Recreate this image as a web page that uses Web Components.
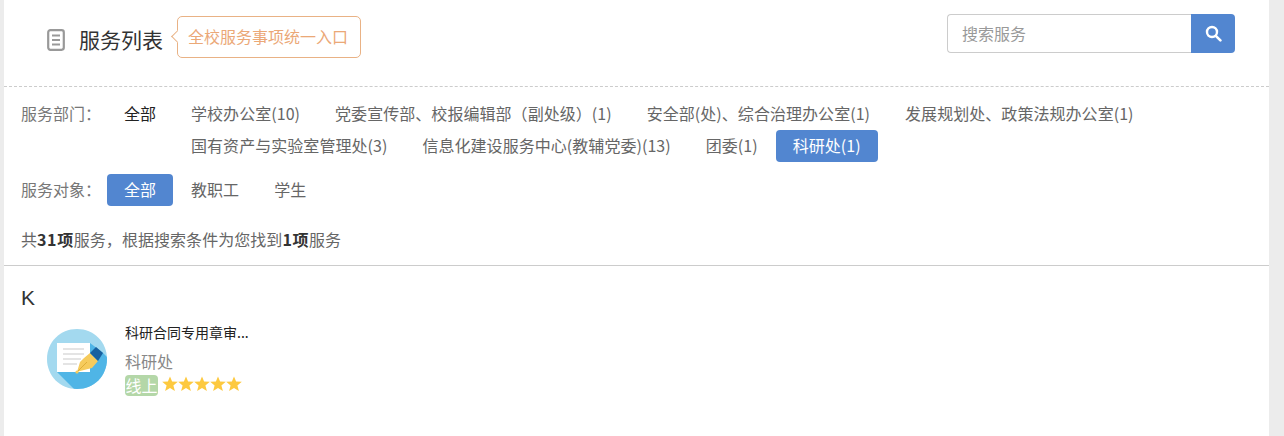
<!DOCTYPE html>
<html lang="zh">
<head>
<meta charset="utf-8">
<title>服务列表</title>
<style>
    html, body { margin: 0; height: 100%; }
    body {
        background: #ececec;
        font-family: "Noto Sans CJK SC", "Liberation Sans", sans-serif;
        overflow: hidden;
    }
</style>
</head>
<body>
<service-page>
    <service-header slot="header" title-text="服务列表" tip="全校服务事项统一入口" placeholder="搜索服务"></service-header>
    <filter-row label="服务部门：">
        <filter-chip slot="all" plain>全部</filter-chip>
        <filter-chip>学校办公室(10)</filter-chip>
        <filter-chip>党委宣传部、校报编辑部（副处级）(1)</filter-chip>
        <filter-chip>安全部(处)、综合治理办公室(1)</filter-chip>
        <filter-chip>发展规划处、政策法规办公室(1)</filter-chip>
        <filter-chip>国有资产与实验室管理处(3)</filter-chip>
        <filter-chip>信息化建设服务中心(教辅党委)(13)</filter-chip>
        <filter-chip>团委(1)</filter-chip>
        <filter-chip active>科研处(1)</filter-chip>
    </filter-row>
    <filter-row label="服务对象：">
        <filter-chip slot="all" active>全部</filter-chip>
        <filter-chip>教职工</filter-chip>
        <filter-chip>学生</filter-chip>
    </filter-row>
    <result-count total="31" found="1"></result-count>
    <service-group letter="K">
        <service-card name="科研合同专用章审..." dept="科研处" mode="线上"></service-card>
    </service-group>
</service-page>

<script>
class ServicePage extends HTMLElement {
    constructor() {
        super();
        this.attachShadow({ mode: 'open' });
        this.shadowRoot.innerHTML = `
        <style>
            :host {
                display: block;
                box-sizing: border-box;
                width: 1265px;
                height: 436px;
                margin-left: 4px;
                background: #fff;
            }
            .filters {
                padding: 11px 0 0 0;
            }
        </style>
        <slot name="header"></slot>
        <div class="filters"><slot></slot></div>
        `;
    }
}

class ServiceHeader extends HTMLElement {
    constructor() {
        super();
        this.attachShadow({ mode: 'open' });
        this.shadowRoot.innerHTML = `
        <style>
            :host {
                display: flex;
                justify-content: space-between;
                box-sizing: border-box;
                height: 87px;
                padding: 14px 34px 0 42px;
                border-bottom: 1px dashed #ccc;
            }
            .left {
                display: flex;
                align-items: center;
                height: 44px;
            }
            svg.doc { width: 20px; height: 24px; flex: none; margin-top: 8px; }
            h1 {
                margin: 6px 0 0 13px;
                font-size: 21px;
                font-weight: 400;
                color: #333;
                line-height: 28px;
                white-space: nowrap;
            }
            .tip {
                position: relative;
                box-sizing: border-box;
                height: 42px;
                margin: 1px 0 0 14px;
                padding: 0 11px 0 10px;
                width: 184px;
                border: 1px solid #e9b285;
                border-radius: 5px;
                color: #eba877;
                font-size: 16px;
                line-height: 38px;
                white-space: nowrap;
                background: #fff;
            }
            .tip::before {
                content: "";
                position: absolute;
                left: -5px;
                top: 15px;
                width: 8px;
                height: 8px;
                background: #fff;
                border-left: 1px solid #e9b285;
                border-bottom: 1px solid #e9b285;
                transform: rotate(45deg);
            }
            .search {
                display: flex;
                height: 39px;
                width: 288px;
            }
            .search input {
                flex: 1;
                min-width: 0;
                box-sizing: border-box;
                padding: 0 14px 2px;
                border: 1px solid #ccc;
                border-right: 0;
                border-radius: 4px 0 0 4px;
                font: 16px "Noto Sans CJK SC", "Liberation Sans", sans-serif;
                color: #555;
                outline: none;
            }
            .search input::placeholder { color: #999; opacity: 1; }
            .search button {
                display: flex;
                align-items: center;
                justify-content: center;
                width: 44px;
                padding: 0;
                border: 0;
                border-radius: 0 4px 4px 0;
                background: #5286d0;
            }
            .search svg { width: 17px; height: 17px; }
        </style>
        <div class="left">
            <svg class="doc" viewBox="0 0 20 24" fill="none" stroke="#999">
                <rect x="2.2" y="2.2" width="15.6" height="19.6" rx="2.2" stroke-width="2.2"/>
                <path d="M6 7.5h8M6 12h8M6 16.5h8" stroke-width="1.8"/>
            </svg>
            <h1></h1>
            <div class="tip"></div>
        </div>
        <div class="search">
            <input type="text">
            <button type="button" aria-label="搜索">
                <svg viewBox="0 0 17 17" fill="none" stroke="#fff">
                    <circle cx="7" cy="7" r="5" stroke-width="2.4"/>
                    <path d="M10.8 10.8l4.6 4.6" stroke-width="2.6" stroke-linecap="round"/>
                </svg>
            </button>
        </div>
        `;
    }

    connectedCallback() {
        this.shadowRoot.querySelector('h1').textContent = this.getAttribute('title-text');
        this.shadowRoot.querySelector('.tip').textContent = this.getAttribute('tip');
        this.shadowRoot.querySelector('input').placeholder = this.getAttribute('placeholder');
    }
}

class FilterRow extends HTMLElement {
    constructor() {
        super();
        this.attachShadow({ mode: 'open' });
        this.shadowRoot.innerHTML = `
        <style>
            :host {
                display: flex;
                align-items: flex-start;
                box-sizing: border-box;
                padding: 0 100px 0 17px;
                margin-bottom: 12px;
            }
            .label {
                flex: none;
                width: 86px;
                font-size: 16px;
                line-height: 30px;
                color: #777;
                white-space: nowrap;
            }
            .all { flex: none; box-sizing: border-box; width: 67px; padding-right: 1px; }
            .items {
                display: flex;
                flex-wrap: wrap;
                gap: 0 1px;
            }
        </style>
        <div class="label"></div>
        <div class="all"><slot name="all"></slot></div>
        <div class="items"><slot></slot></div>
        `;
    }

    connectedCallback() {
        this.shadowRoot.querySelector('.label').textContent = this.getAttribute('label');
    }
}

class FilterChip extends HTMLElement {
    constructor() {
        super();
        this.attachShadow({ mode: 'open' });
        this.shadowRoot.innerHTML = `
        <style>
            :host {
                display: block;
                height: 32px;
                padding: 0 17px;
                border-radius: 4px;
                font-size: 16px;
                line-height: 30px;
                letter-spacing: .05px;
                color: #666;
                white-space: nowrap;
            }
            :host([plain]) { color: #222; }
            :host([active]) { background: #5286d0; color: #fff; }
            :host([slot="all"]) { letter-spacing: 0; }
        </style>
        <slot></slot>
        `;
    }
}

class ResultCount extends HTMLElement {
    constructor() {
        super();
        this.attachShadow({ mode: 'open' });
        this.shadowRoot.innerHTML = `
        <style>
            :host {
                display: block;
                box-sizing: border-box;
                height: 48px;
                padding: 5px 0 0 17px;
                border-bottom: 1px solid #ccc;
                font-size: 16px;
                line-height: 32px;
                letter-spacing: .05px;
                color: #666;
            }
            b { color: #333; letter-spacing: .6px; }
        </style>
        共<b class="total"></b>服务，根据搜索条件为您找到<b class="found"></b>服务
        `;
    }

    connectedCallback() {
        this.shadowRoot.querySelector('.total').textContent = this.getAttribute('total') + '项';
        this.shadowRoot.querySelector('.found').textContent = this.getAttribute('found') + '项';
    }
}

class ServiceGroup extends HTMLElement {
    constructor() {
        super();
        this.attachShadow({ mode: 'open' });
        this.shadowRoot.innerHTML = `
        <style>
            :host { display: block; padding: 19px 0 0 17px; }
            h2 {
                margin: 0;
                font-size: 21px;
                font-weight: 400;
                line-height: 26px;
                color: #333;
                font-family: "Liberation Sans", sans-serif;
            }
            .list { display: flex; padding: 18px 0 0 26px; }
        </style>
        <h2></h2>
        <div class="list"><slot></slot></div>
        `;
    }

    connectedCallback() {
        this.shadowRoot.querySelector('h2').textContent = this.getAttribute('letter');
    }
}

class ServiceCard extends HTMLElement {
    constructor() {
        super();
        this.attachShadow({ mode: 'open' });
        this.shadowRoot.innerHTML = `
        <style>
            :host { display: flex; width: 205px; }
            svg.icon { flex: none; width: 60px; height: 60px; margin: 0 18px 0 0; }
            .body { width: 124px; margin-top: -7px; }
            .name {
                font-size: 14px;
                line-height: 20px;
                color: #222;
                white-space: nowrap;
                overflow: hidden;
                text-overflow: ellipsis;
            }
            .dept {
                margin-top: 8px;
                font-size: 16px;
                line-height: 22px;
                color: #888;
            }
            .meta { display: flex; align-items: center; margin: 2px 0 0 0; height: 22px; }
            .tag {
                width: 33px;
                height: 21px;
                border-radius: 4px;
                background: #b4d7a8;
                color: #fff;
                font-size: 16px;
                line-height: 20px;
                text-align: center;
            }
            .stars { display: flex; margin: -3px 0 0 4px; }
            .stars svg { width: 16px; height: 16px; display: block; }
        </style>
        <svg class="icon" viewBox="0 0 60 60">
            <defs>
                <clipPath id="squircle"><path d="M30 0C47 0 60 13 60 30C60 47 47 60 30 60C13 60 0 47 0 30C0 13 13 0 30 0Z"/></clipPath>
            </defs>
            <g clip-path="url(#squircle)">
                <rect width="60" height="60" fill="#a3d9ef"/>
                <path d="M10 43L27 60H60V28L55 23L43 14Z" fill="#4fb5e6"/>
                <rect x="10" y="14" width="33" height="29" fill="#fff"/>
                <path d="M16 20h21M16 25h21M16 30h18M16 35h14" stroke="#c9c9c9" stroke-width="1.2"/>
                <path d="M43 24L51 32L45 39L33 42L30 43L33 33L37 29Z" fill="#f6cb5c"/>
                <path d="M31 42L40 33" stroke="#d9a52e" stroke-width=".8"/>
                <circle cx="30" cy="43" r="1.6" fill="#f6cb5c"/>
                <path d="M43 24L49 18L56 24L51 32Z" fill="#17609f"/>
            </g>
        </svg>
        <div class="body">
            <div class="name"></div>
            <div class="dept"></div>
            <div class="meta">
                <span class="tag"></span>
                <span class="stars"></span>
            </div>
        </div>
        `;
    }

    connectedCallback() {
        const root = this.shadowRoot;
        root.querySelector('.name').textContent = this.getAttribute('name');
        root.querySelector('.dept').textContent = this.getAttribute('dept');
        root.querySelector('.tag').textContent = this.getAttribute('mode');
        const star = '<svg viewBox="0 0 16 16"><path fill="#fdc93f" d="M8 .4l2.1 5.2 5.7.2-4.4 3.6 1.5 5.6L8 12l-4.9 3 1.5-5.6L.2 5.8l5.7-.2z"/></svg>';
        root.querySelector('.stars').innerHTML = star.repeat(5);
    }
}

customElements.define('service-page', ServicePage);
customElements.define('service-header', ServiceHeader);
customElements.define('filter-row', FilterRow);
customElements.define('filter-chip', FilterChip);
customElements.define('result-count', ResultCount);
customElements.define('service-group', ServiceGroup);
customElements.define('service-card', ServiceCard);
</script>
</body>
</html>
